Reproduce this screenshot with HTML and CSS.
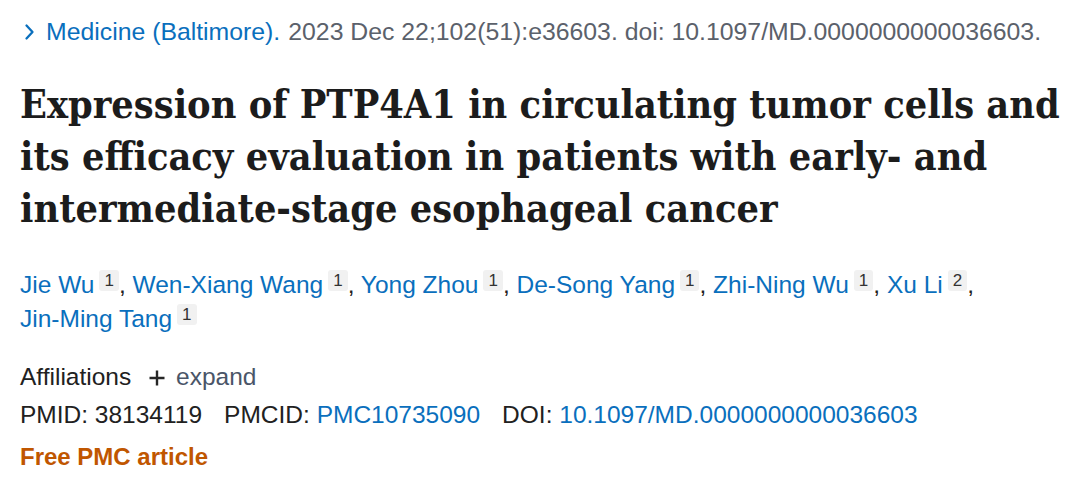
FILE: index.html
```html
<!DOCTYPE html>
<html>
<head>
<meta charset="utf-8">
<link rel="stylesheet" href="styles.css">
</head>
<body>
<div class="page">
  <div class="cite">
    <span class="chev"><svg width="11" height="18" viewBox="0 0 11 18"><path d="M2.5 2.5 L8.5 9 L2.5 15.5" fill="none" stroke="#0a6fbd" stroke-width="2.3" stroke-linecap="round" stroke-linejoin="round"/></svg></span>
    <a class="link">Medicine (Baltimore).</a>
    <span class="grey">2023 Dec 22;102(51):e36603. doi: 10.1097/MD.0000000000036603.</span>
  </div>
  <h1 class="title">Expression of PTP4A1 in circulating tumor cells and its efficacy evaluation in patients with early- and intermediate-stage esophageal cancer</h1>
  <div class="authors">
    <a class="link">Jie Wu</a><sup class="aff">1</sup>, <a class="link">Wen-Xiang Wang</a><sup class="aff">1</sup>, <a class="link">Yong Zhou</a><sup class="aff">1</sup>, <a class="link">De-Song Yang</a><sup class="aff">1</sup>, <a class="link">Zhi-Ning Wu</a><sup class="aff">1</sup>, <a class="link">Xu Li</a><sup class="aff">2</sup>,<br>
    <a class="link">Jin-Ming Tang</a><sup class="aff">1</sup>
  </div>
  <div class="affil">Affiliations <span class="expand"><svg class="plus" width="18" height="18" viewBox="0 0 18 18"><path d="M9 1.5 V16.5 M1.5 9 H16.5" stroke="#262626" stroke-width="2.4"/></svg><span class="exp-text">expand</span></span></div>
  <div class="ids">
    <span class="id">PMID: 38134119</span>
    <span class="id">PMCID: <a class="link">PMC10735090</a></span>
    <span class="id">DOI: <a class="link">10.1097/MD.0000000000036603</a></span>
  </div>
  <div class="free">Free PMC article</div>
</div>
</body>
</html>
```

FILE: styles.css
```css
html, body {
  margin: 0;
  padding: 0;
  background: #ffffff;
}
.page {
  padding: 14px 20px 0 20px;
  font-family: "Liberation Sans", Arial, sans-serif;
  font-size: 24.5px;
  color: #212121;
}
.link {
  color: #0a6fbd;
  text-decoration: none;
}
.cite {
  display: flex;
  align-items: center;
  gap: 8px;
  height: 36px;
  white-space: nowrap;
  font-size: 24.8px;
}
.chev {
  display: inline-flex;
  width: 18px;
  justify-content: center;
}
.grey {
  color: #5b616b;
}
.title {
  font-family: "DejaVu Serif Condensed", "DejaVu Serif", serif;
  font-stretch: condensed;
  font-weight: bold;
  font-size: 39.3px;
  line-height: 52px;
  color: #1c1c1c;
  margin: 28px 0 0 0;
}
.authors {
  margin-top: 34px;
  line-height: 34px;
}
.aff {
  display: inline-block;
  margin-left: 5px;
  background: #f1f1f1;
  color: #333333;
  font-size: 17px;
  line-height: 21px;
  padding: 0 5px;
  border-radius: 3px;
  vertical-align: 7px;
}
.affil {
  margin-top: 22px;
  line-height: 38px;
}
.expand {
  color: #4a5568;
  margin-left: 10px;
}
.plus {
  vertical-align: -2px;
  margin-right: 10px;
}
.ids {
  display: flex;
  gap: 22px;
  line-height: 38px;
}
.free {
  color: #c05600;
  font-weight: bold;
  font-size: 24px;
  line-height: 46px;
}
```
